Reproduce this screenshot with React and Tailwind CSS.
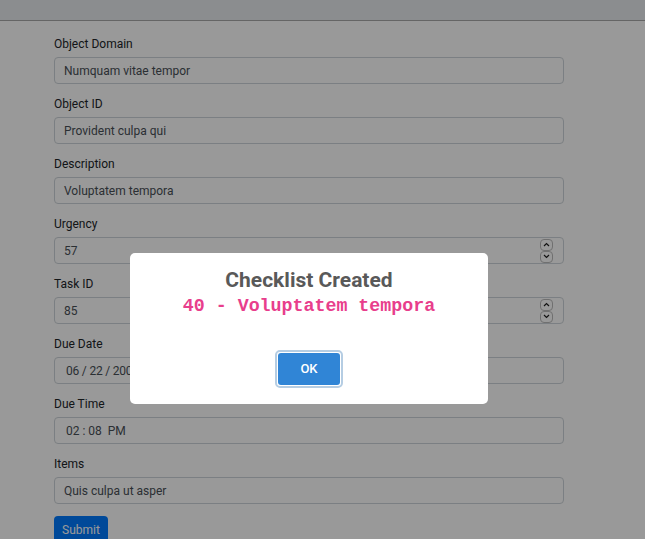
import React from "react";

function Spin() {
  return (
    <div className="flex flex-col gap-0 mr-[10px]">
      <div className="w-[13px] h-[12px] border border-[#bbb] rounded-[4px] flex items-center justify-center">
        <svg width="7" height="5" viewBox="0 0 7 5"><path d="M1 4 L3.5 1.5 L6 4" stroke="#222" strokeWidth="1.2" fill="none" /></svg>
      </div>
      <div className="w-[13px] h-[12px] border border-[#bbb] rounded-[4px] flex items-center justify-center">
        <svg width="7" height="5" viewBox="0 0 7 5"><path d="M1 1 L3.5 3.5 L6 1" stroke="#222" strokeWidth="1.2" fill="none" /></svg>
      </div>
    </div>
  );
}

function Field({ label, value, spin, pad = "pl-[9px]" }) {
  return (
    <div className="flex flex-col">
      <div className="h-[18px] leading-[18px] text-[12px] text-[#212529] mb-[4px] mt-[1px]">{label}</div>
      <div className={`h-[27px] w-[510px] border border-[#ced4da] rounded-[4px] bg-white flex items-center justify-between ${pad} text-[12px] text-[#495057] mb-[10px]`}>
        <span>{value}</span>
        {spin && <Spin />}
      </div>
    </div>
  );
}

export default function App() {
  return (
    <div className="relative w-[645px] h-[539px] overflow-hidden bg-white" style={{ fontFamily: "Roboto, 'Liberation Sans', sans-serif" }}>
      <div className="h-[21px] bg-[#e8ecee] border-b border-[#a8a8a8]" />
      <div className="pl-[54px] pt-[13px]">
        <Field label="Object Domain" value="Numquam vitae tempor" />
        <Field label="Object ID" value="Provident culpa qui" />
        <Field label="Description" value="Voluptatem tempora" />
        <Field label="Urgency" value="57" spin />
        <Field label="Task ID" value="85" spin />
        <Field label="Due Date" value="06 / 22 / 2002" pad="pl-[11px] tracking-[-0.2px]" />
        <Field label="Due Time" value={"02 : 08  PM"} pad="pl-[11px] whitespace-pre" />
        <Field label="Items" value="Quis culpa ut asper" />
        <div className="mt-[2px] w-[54px] h-[28px] bg-[#007bff] rounded-[4px] text-white text-[12px] flex items-center justify-center">Submit</div>
      </div>
      <div className="absolute inset-0 bg-black/40" />
      <div className="absolute left-[130px] top-[253px] w-[358px] h-[151px] bg-white rounded-[5px] flex flex-col items-center">
        <div className="mt-[13px] text-[21px] font-bold leading-[28px] text-[#595959]">Checklist Created</div>
        <div className="mt-[1px] text-[18.3px] font-bold leading-[22px] text-[#e83e8c]" style={{ fontFamily: "'Liberation Mono', monospace" }}>40 - Voluptatem tempora</div>
        <div className="mt-[33px] rounded-[5px] p-[1px] border-2 border-[#b5cde3]">
          <div className="w-[62px] h-[32px] bg-[#3085d6] rounded-[3px] text-white text-[13px] font-medium flex items-center justify-center">OK</div>
        </div>
      </div>
    </div>
  );
}
